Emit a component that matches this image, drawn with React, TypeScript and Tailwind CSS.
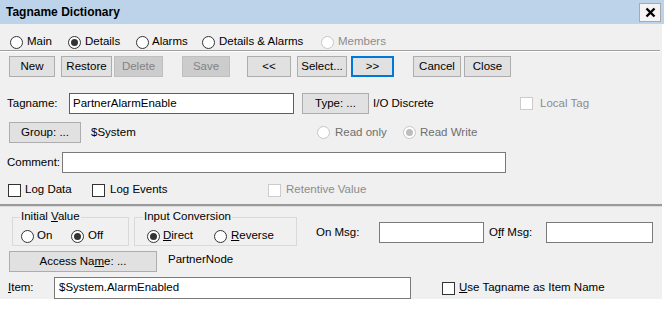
import { ReactElement, ReactNode } from "react";
import clsx from "clsx";

function Radio({ checked, disabled }: { checked?: boolean; disabled?: boolean }): ReactElement {
  return (
    <span
      className={clsx(
        "w-[13px] h-[13px] rounded-full border bg-white flex items-center justify-center shrink-0",
        disabled ? "border-[#c6c6c6]" : "border-[#333333]"
      )}
    >
      {checked && (
        <span className={clsx("w-[7px] h-[7px] rounded-full", disabled ? "bg-[#bdbdbd]" : "bg-[#333333]")} />
      )}
    </span>
  );
}

function Check({ disabled }: { disabled?: boolean }): ReactElement {
  return (
    <span
      className={clsx(
        "w-[13px] h-[13px] border bg-white shrink-0",
        disabled ? "border-[#cccccc]" : "border-[#333333]"
      )}
    />
  );
}

function Btn({
  children,
  w,
  disabled,
  focused,
  className,
}: {
  children: ReactNode;
  w: string;
  disabled?: boolean;
  focused?: boolean;
  className?: string;
}): ReactElement {
  return (
    <div
      className={clsx(
        "h-[21px] flex items-center justify-center shrink-0",
        w,
        disabled
          ? "bg-[#cccccc] border border-[#bfbfbf] text-[#838383]"
          : focused
          ? "bg-[#e1e1e1] border-2 border-[#0078d7]"
          : "bg-[#e1e1e1] border border-[#adadad]",
        className
      )}
    >
      {children}
    </div>
  );
}

function Field({ w, children, focused, className }: { w: string; children?: ReactNode; focused?: boolean; className?: string }): ReactElement {
  return (
    <div
      className={clsx(
        "h-[21px] bg-white border flex items-center shrink-0",
        focused ? "border-[#0078d7]" : "border-[#7a7a7a]",
        w,
        className
      )}
    >
      {children}
    </div>
  );
}

export default function App(): ReactElement {
  return (
    <div className="w-[664px] h-[323px] bg-white text-[11.5px] text-black font-['Liberation_Sans',Arial,sans-serif] leading-none">
      {/* title bar */}
      <div className="h-[24px] bg-[#bdd3ea] flex items-center justify-between pl-[6px] pr-[3px]">
        <span className="font-bold text-[12px]">Tagname Dictionary</span>
        <div className="w-[22px] h-[19px] bg-[#f4f4f4] border border-[#a9a9a9] flex items-center justify-center">
          <svg width="11" height="11" viewBox="0 0 11 11">
            <path d="M1.5 1.5 L9.5 9.5 M9.5 1.5 L1.5 9.5" stroke="#000" strokeWidth="2.4" />
          </svg>
        </div>
      </div>

      <div className="w-[662px] h-[275px] bg-[#f0f0f0] flex flex-col">
        {/* view radios */}
        <div className="mt-[11px] h-[14px] pl-[10px] flex items-center">
          <div className="w-[58px] flex items-center gap-[4px]"><Radio /><span>Main</span></div>
          <div className="w-[68px] flex items-center gap-[4px]"><Radio checked /><span>Details</span></div>
          <div className="w-[66px] flex items-center gap-[3px]"><Radio /><span>Alarms</span></div>
          <div className="w-[119px] flex items-center gap-[4px]"><Radio /><span>Details &amp; Alarms</span></div>
          <div className="flex items-center gap-[4px] text-[#8c8c8c]"><Radio disabled /><span>Members</span></div>
        </div>
        <div className="mt-[1px] w-[660px] h-[1px] bg-[#a0a0a0]" />
        <div className="w-[660px] h-[1px] bg-white" />

        {/* toolbar */}
        <div className="mt-[4px] pl-[9px] flex">
          <Btn w="w-[46px]">New</Btn>
          <Btn w="w-[51px]" className="ml-[6px]">Restore</Btn>
          <Btn w="w-[49px]" className="ml-[2px]" disabled>Delete</Btn>
          <Btn w="w-[48px]" className="ml-[19px]" disabled>Save</Btn>
          <Btn w="w-[44px]" className="ml-[17px]">&lt;&lt;</Btn>
          <Btn w="w-[50px]" className="ml-[6px]">Select...</Btn>
          <Btn w="w-[43px]" className="ml-[4px]" focused>&gt;&gt;</Btn>
          <Btn w="w-[48px]" className="ml-[19px]">Cancel</Btn>
          <Btn w="w-[47px]" className="ml-[3px]">Close</Btn>
        </div>

        {/* tagname */}
        <div className="mt-[16px] pl-[7px] flex items-center">
          <span className="w-[62px]">Tagname:</span>
          <Field w="w-[225px]" focused className="pl-[3px]">PartnerAlarmEnable</Field>
          <Btn w="w-[67px]" className="ml-[8px] h-[20px]">Type: ...</Btn>
          <span className="ml-[4px] w-[147px]">I/O Discrete</span>
          <Check disabled />
          <span className="ml-[7px] text-[#8c8c8c]">Local Tag</span>
        </div>

        {/* group */}
        <div className="mt-[8px] pl-[9px] flex items-center">
          <Btn w="w-[72px]" className="h-[20px]">Group: ...</Btn>
          <span className="ml-[10px] w-[226px]">$System</span>
          <div className="w-[86px] flex items-center gap-[5px] text-[#6e6e6e]"><Radio disabled /><span>Read only</span></div>
          <div className="flex items-center gap-[4px] text-[#6e6e6e]"><Radio checked disabled /><span>Read Write</span></div>
        </div>

        {/* comment */}
        <div className="mt-[9px] pl-[7px] flex items-center">
          <span className="w-[55px]">Comment:</span>
          <Field w="w-[444px]" />
        </div>

        {/* logging */}
        <div className="mt-[10px] h-[14px] pl-[8px] flex items-center">
          <div className="w-[84px] flex items-center gap-[4px]"><Check /><span>Log Data</span></div>
          <div className="w-[176px] flex items-center gap-[5px]"><Check /><span>Log Events</span></div>
          <div className="flex items-center gap-[5px] text-[#8c8c8c]"><Check disabled /><span>Retentive Value</span></div>
        </div>

        <div className="mt-[7px] w-[662px] h-[2px] bg-[#9a9a9a]" />
        <div className="w-[662px] h-[1px] bg-[#dcdcdc]" />

        {/* discrete options */}
        <div className="mt-[10px] pl-[12px] flex items-start">
          <div className="relative w-[117px] h-[29px] border border-[#d9d9d9] pl-[8px] pt-[9px] flex">
            <span className="absolute left-[7px] top-[-7px] px-[1px] bg-[#f0f0f0]">
              Initial <span className="underline">V</span>alue
            </span>
            <div className="w-[50px] flex items-center gap-[3px]"><Radio /><span>On</span></div>
            <div className="flex items-center gap-[4px]"><Radio checked /><span>Off</span></div>
          </div>
          <div className="relative ml-[5px] w-[163px] h-[29px] border border-[#d9d9d9] pl-[12px] pt-[9px] flex">
            <span className="absolute left-[8px] top-[-7px] px-[1px] bg-[#f0f0f0]">Input Conversion</span>
            <div className="w-[67px] flex items-center gap-[3px]"><Radio checked /><span><span className="underline">D</span>irect</span></div>
            <div className="flex items-center gap-[4px]"><Radio /><span><span className="underline">R</span>everse</span></div>
          </div>
          <div className="ml-[19px] mt-[5px] flex items-center">
            <span className="w-[63px]">On Msg:</span>
            <Field w="w-[105px]" />
            <span className="ml-[5px] w-[57px]">O<span className="underline">f</span>f Msg:</span>
            <Field w="w-[107px]" />
          </div>
        </div>

        {/* access name */}
        <div className="mt-[5px] pl-[9px] flex items-start">
          <Btn w="w-[148px]">
            <span>Access Na<span className="underline">m</span>e: ...</span>
          </Btn>
          <span className="ml-[11px] pt-[3px]">PartnerNode</span>
        </div>

        {/* item */}
        <div className="mt-[5px] pl-[8px] flex items-center">
          <span className="w-[46px]"><span className="underline">I</span>tem:</span>
          <Field w="w-[357px]" className="h-[22px] pl-[4px]">$System.AlarmEnabled</Field>
          <div className="ml-[31px] flex items-center gap-[4px]">
            <Check />
            <span><span className="underline">U</span>se Tagname as Item Name</span>
          </div>
        </div>
      </div>
    </div>
  );
}
